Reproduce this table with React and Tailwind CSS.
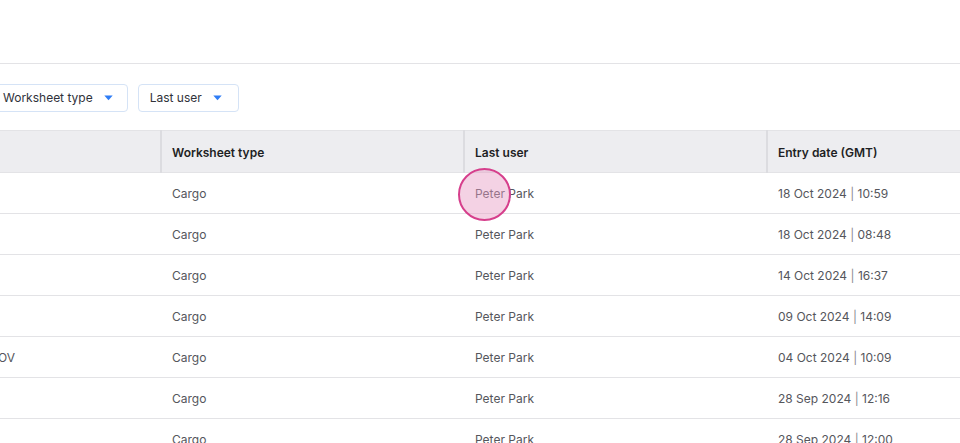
import React from "react";

const rows = [
  ["", "Cargo", "Peter Park", "18 Oct 2024", "10:59"],
  ["", "Cargo", "Peter Park", "18 Oct 2024", "08:48"],
  ["", "Cargo", "Peter Park", "14 Oct 2024", "16:37"],
  ["", "Cargo", "Peter Park", "09 Oct 2024", "14:09"],
  ["GOV", "Cargo", "Peter Park", "04 Oct 2024", "10:09"],
  ["", "Cargo", "Peter Park", "28 Sep 2024", "12:16"],
  ["", "Cargo", "Peter Park", "28 Sep 2024", "12:00"],
];

function Caret() {
  return (
    <svg width="9" height="6" viewBox="0 0 9 6" className="shrink-0">
      <path d="M0.3 0.5 H8.7 L4.5 5.3 Z" fill="#2f7df6" />
    </svg>
  );
}

function FilterButton({ label, className = "" }) {
  return (
    <button
      className={
        "flex h-[28px] items-center gap-[11px] rounded-[4px] border border-[#d5e3f6] bg-white pl-[11px] pt-[1px] text-[12px] text-[#30323a] " +
        className
      }
    >
      <span>{label}</span>
      <Caret />
    </button>
  );
}

export default function App() {
  return (
    <div
      className="relative h-[443px] w-[960px] overflow-hidden bg-white"
      style={{ fontFamily: "Inter, 'Noto Sans', sans-serif" }}
    >
      <div className="h-[64px] border-b border-[#e3e3e6]" />
      <div className="flex h-[66px] items-center gap-[10px] pt-[1px]">
        <FilterButton label="Worksheet type" className="-ml-[9px] pr-[14px]" />
        <FilterButton label="Last user" className="pr-[16px]" />
      </div>
      <div className="-ml-[140px] w-[1250px]">
        <table className="w-full table-fixed border-collapse text-[12px]">
          <colgroup>
            <col className="w-[301px]" />
            <col className="w-[303px]" />
            <col className="w-[303px]" />
            <col className="w-[343px]" />
          </colgroup>
          <thead>
            <tr className="h-[42px] border-y border-[#e3e3e6] bg-[#ededf0] text-left text-[#1e1f24]">
              <th className="font-semibold"></th>
              <th className="border-l-2 border-[#dcdce0] pl-[10px] pt-[2px] font-semibold">Worksheet type</th>
              <th className="border-l-2 border-[#dcdce0] pl-[10px] pt-[2px] font-semibold">Last user</th>
              <th className="border-l-2 border-[#dcdce0] pl-[10px] pt-[2px] font-semibold">Entry date (GMT)</th>
            </tr>
          </thead>
          <tbody className="text-[#55565c]">
            {rows.map((r, i) => (
              <tr key={i} className="h-[41px] border-b border-[#e3e3e6]">
                <td className="pl-[129px] pt-[2px]">{r[0]}</td>
                <td className="pl-[11px] pt-[2px]">{r[1]}</td>
                <td className="pl-[11px] pt-[2px]">{r[2]}</td>
                <td className="pl-[11px] pt-[2px]">
                  {r[3]} <span className="text-[#8a8b90]">|</span> {r[4]}
                </td>
              </tr>
            ))}
          </tbody>
        </table>
      </div>
      <div className="pointer-events-none absolute left-[458px] top-[168px] h-[53px] w-[53px] rounded-full border-2 border-[#d63f8c] bg-[#e79cc3]/45" />
    </div>
  );
}
